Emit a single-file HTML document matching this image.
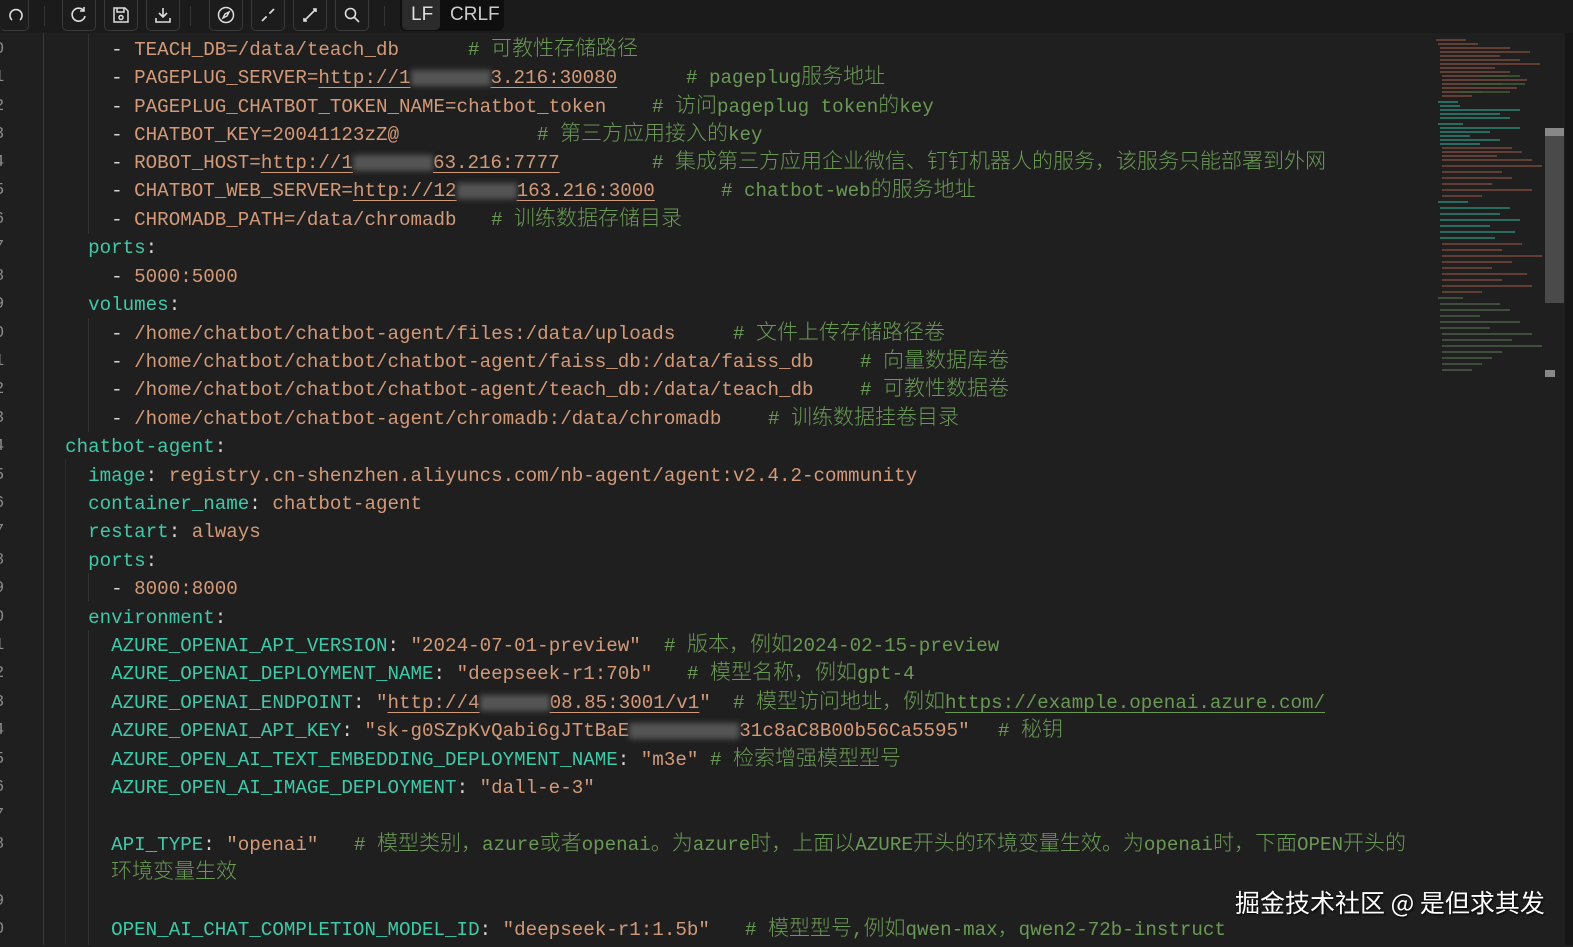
<!DOCTYPE html>
<html><head><meta charset="utf-8"><style>
html,body{margin:0;padding:0;}
body{width:1573px;height:945px;overflow:hidden;background:#1f1f1f;position:relative;font-family:"Liberation Mono","Noto Sans CJK SC",monospace;font-size:19.2px;}
.tb{position:absolute;left:0;top:0;width:1573px;height:33px;background:#1b1b1b;}
.btn{position:absolute;top:0;width:32px;height:30px;border:1px solid #3a3a3a;border-top:none;border-radius:0 0 5px 5px;background:#1c1c1c;}
.btn svg{position:absolute;left:7px;top:6px;}
.sep{position:absolute;top:6px;width:1px;height:20px;background:#333;}
.lf{position:absolute;left:400px;top:0;width:104px;height:31px;background:#0f0f0f;border-radius:0 0 6px 6px;font-family:"Liberation Sans",sans-serif;font-size:19px;color:#ddd;}
.lf span{position:absolute;top:4px;}
.gut{position:absolute;left:43px;top:33px;width:1px;height:912px;background:#3a3a3a;}
.ln{position:absolute;left:-6px;color:#8a8a8a;font-size:17px;}
.wrap{position:absolute;left:0;top:2px;width:1573px;height:945px;}
.l{position:absolute;left:19px;height:28px;line-height:28px;white-space:pre;color:#d4d4d4;}
.c{position:absolute;height:28px;line-height:28px;white-space:pre;color:#6a9955;font-family:"Liberation Mono","Noto Sans CJK SC",monospace;}
.z{font-family:"Noto Sans CJK SC",sans-serif;font-size:21px;font-weight:300;line-height:0;}
.k{color:#3fc9a9;} .s{color:#d39a7a;} .o{color:#d39a7a;}
.u{text-decoration:underline;text-decoration-color:#d39a7a;text-underline-offset:4px;}
.b{display:inline-block;background:#555;filter:blur(3px);height:16px;vertical-align:middle;}
.ig{position:absolute;width:1px;background:#333;}
.wm{position:absolute;left:1235px;top:884px;color:#fff;font-family:"Noto Sans CJK SC",sans-serif;font-size:25px;text-shadow:1px 1px 2px #000;white-space:pre;}
</style></head><body>
<div class="tb">
 <div class="btn" style="left:0px;width:28px;border-left:none"><svg width="18" height="18" viewBox="0 0 18 18" fill="none" stroke="#ddd" stroke-width="1.6"><path d="M5 14A6 6 0 1 1 13 14"/></svg></div>
 <div class="sep" style="left:44px"></div>
 <div class="btn" style="left:62px"><svg width="18" height="18" viewBox="0 0 18 18" fill="none" stroke="#ddd" stroke-width="1.6"><path d="M14 5A6.5 6.5 0 1 0 15 10"/><path d="M14 1v4h-4"/></svg></div>
 <div class="btn" style="left:104px"><svg width="18" height="18" viewBox="0 0 18 18" fill="none" stroke="#ddd" stroke-width="1.5"><path d="M2 2h11l3 3v11H2z"/><path d="M5 2v4h7V2"/><circle cx="9" cy="11.5" r="2"/></svg></div>
 <div class="btn" style="left:146px"><svg width="18" height="18" viewBox="0 0 18 18" fill="none" stroke="#ddd" stroke-width="1.6"><path d="M9 2v9M5 7l4 4 4-4M2 12v4h14v-4"/></svg></div>
 <div class="sep" style="left:190px"></div>
 <div class="btn" style="left:209px"><svg width="18" height="18" viewBox="0 0 18 18" fill="none" stroke="#ddd" stroke-width="1.5"><circle cx="9" cy="9" r="7.5"/><path d="M12 6l-2 4-4 2 2-4z"/></svg></div>
 <div class="btn" style="left:251px"><svg width="18" height="18" viewBox="0 0 18 18" fill="none" stroke="#ddd" stroke-width="1.6"><path d="M3 15l4-4M6 11h1v1M15 3l-4 4M11 6v1h1"/></svg></div>
 <div class="btn" style="left:293px"><svg width="18" height="18" viewBox="0 0 18 18" fill="none" stroke="#ddd" stroke-width="1.6"><path d="M3 15l12-12M3 12v3h3M15 6V3h-3"/></svg></div>
 <div class="btn" style="left:335px"><svg width="18" height="18" viewBox="0 0 18 18" fill="none" stroke="#ddd" stroke-width="1.6"><circle cx="7.5" cy="7.5" r="5"/><path d="M11 11l5 5"/></svg></div>
 <div class="sep" style="left:384px"></div>
 <div class="lf"><div style="position:absolute;left:2px;top:0;width:38px;height:30px;background:#2b2b2b;border-radius:0 0 5px 5px"></div><span style="left:11px">LF</span><span style="left:50px;color:#ccc">CRLF</span></div>
</div>
<div class="gut"></div>
<div class="ig" style="left:88px;top:34px;height:200px"></div>
<div class="ig" style="left:88px;top:318px;height:114px"></div>
<div class="ig" style="left:88px;top:573px;height:28px"></div>
<div class="ig" style="left:65px;top:459px;height:486px;background:#2c2c2c"></div>
<div class="ig" style="left:88px;top:630px;height:315px"></div>

<!-- minimap -->
<svg style="position:absolute;left:1430px;top:36px" width="118" height="345">
<g stroke-width="1.3">
<path d="M6 4h30M8 8h40M10 12h70M10 16h90M10 20h60M10 24h80M10 28h100M10 32h55M10 36h70M12 40h65M12 44h85M12 48h60M12 52h75M12 56h40M12 60h30" stroke="#8a5040"/>
<path d="M50 40h40M40 48h55M30 56h50" stroke="#4a6a3a"/>
<path d="M8 66h20M10 70h20M10 74h80M10 78h60M10 82h70M8 88h25M10 92h80M10 96h50M10 100h30M10 104h60M10 108h40" stroke="#2e9a86"/>
<path d="M12 112h70M12 116h80M12 120h55M12 124h90M12 130h100M12 136h60M12 142h70M12 148h50M12 154h90M12 160h40" stroke="#8a5040"/>
<path d="M8 166h30M10 172h70M10 178h60M10 184h80M10 190h50M10 196h75M10 202h55" stroke="#2e9a86"/>
<path d="M12 208h80M12 214h60M12 220h100M12 226h70M12 232h50M12 238h85M12 244h60M12 250h90M12 256h40" stroke="#8a5040"/>
<path d="M8 262h25M10 268h60M10 274h70M10 280h40M10 286h80M10 292h50M12 298h90M12 304h70M12 310h100M12 316h60M12 322h50M12 328h40M12 334h30" stroke="#556a50"/>
</g></svg>
<div style="position:absolute;left:1545px;top:128px;width:19px;height:175px;background:#4a4a4a"></div>
<div style="position:absolute;left:1545px;top:128px;width:19px;height:8px;background:#888"></div>
<div style="position:absolute;left:1545px;top:370px;width:10px;height:7px;background:#888"></div>
<div style="position:absolute;left:1565px;top:33px;width:8px;height:912px;background:#161616"></div>

<div class="wrap">
<div class="l" style="top:34px">        - <span class="o">TEACH_DB=/data/teach_db</span></div><div class="c" style="left:468px;top:34px"># <span class="z">可教性存储路径</span></div>
<div class="l" style="top:62px">        - <span class="o">PAGEPLUG_SERVER=<span class="u">http://1<span class="b" style="width:80px"></span>3.216:30080</span></span></div><div class="c" style="left:686px;top:62px"># pageplug<span class="z">服务地址</span></div>
<div class="l" style="top:91px">        - <span class="o">PAGEPLUG_CHATBOT_TOKEN_NAME=chatbot_token</span></div><div class="c" style="left:652px;top:91px"># <span class="z">访问</span>pageplug token<span class="z">的</span>key</div>
<div class="l" style="top:119px">        - <span class="o">CHATBOT_KEY=20041123zZ@</span></div><div class="c" style="left:537px;top:119px"># <span class="z">第三方应用接入的</span>key</div>
<div class="l" style="top:147px">        - <span class="o">ROBOT_HOST=<span class="u">http://1<span class="b" style="width:80px"></span>63.216:7777</span></span></div><div class="c" style="left:652px;top:147px"># <span class="z">集成第三方应用企业微信、钉钉机器人的服务，该服务只能部署到外网</span></div>
<div class="l" style="top:175px">        - <span class="o">CHATBOT_WEB_SERVER=<span class="u">http://12<span class="b" style="width:60px"></span>163.216:3000</span></span></div><div class="c" style="left:721px;top:175px"># chatbot-web<span class="z">的服务地址</span></div>
<div class="l" style="top:204px">        - <span class="o">CHROMADB_PATH=/data/chromadb</span></div><div class="c" style="left:491px;top:204px"># <span class="z">训练数据存储目录</span></div>
<div class="l" style="top:232px">      <span class="k">ports</span>:</div>
<div class="l" style="top:261px">        - <span class="o">5000:5000</span></div>
<div class="l" style="top:289px">      <span class="k">volumes</span>:</div>
<div class="l" style="top:318px">        - <span class="o">/home/chatbot/chatbot-agent/files:/data/uploads</span></div><div class="c" style="left:733px;top:318px"># <span class="z">文件上传存储路径卷</span></div>
<div class="l" style="top:346px">        - <span class="o">/home/chatbot/chatbot/chatbot-agent/faiss_db:/data/faiss_db</span></div><div class="c" style="left:860px;top:346px"># <span class="z">向量数据库卷</span></div>
<div class="l" style="top:374px">        - <span class="o">/home/chatbot/chatbot/chatbot-agent/teach_db:/data/teach_db</span></div><div class="c" style="left:860px;top:374px"># <span class="z">可教性数据卷</span></div>
<div class="l" style="top:403px">        - <span class="o">/home/chatbot/chatbot-agent/chromadb:/data/chromadb</span></div><div class="c" style="left:768px;top:403px"># <span class="z">训练数据挂卷目录</span></div>
<div class="l" style="top:431px">    <span class="k">chatbot-agent</span>:</div>
<div class="l" style="top:460px">      <span class="k">image</span>: <span class="o">registry.cn-shenzhen.aliyuncs.com/nb-agent/agent:v2.4.2-community</span></div>
<div class="l" style="top:488px">      <span class="k">container_name</span>: <span class="o">chatbot-agent</span></div>
<div class="l" style="top:516px">      <span class="k">restart</span>: <span class="o">always</span></div>
<div class="l" style="top:545px">      <span class="k">ports</span>:</div>
<div class="l" style="top:573px">        - <span class="o">8000:8000</span></div>
<div class="l" style="top:602px">      <span class="k">environment</span>:</div>
<div class="l" style="top:630px">        <span class="k">AZURE_OPENAI_API_VERSION</span>: <span class="s">"2024-07-01-preview"</span></div><div class="c" style="left:664px;top:630px"># <span class="z">版本，例如</span>2024-02-15-preview</div>
<div class="l" style="top:658px">        <span class="k">AZURE_OPENAI_DEPLOYMENT_NAME</span>: <span class="s">"deepseek-r1:70b"</span></div><div class="c" style="left:687px;top:658px"># <span class="z">模型名称，例如</span>gpt-4</div>
<div class="l" style="top:687px">        <span class="k">AZURE_OPENAI_ENDPOINT</span>: <span class="s">"<span class="u">http://4<span class="b" style="width:70px"></span>08.85:3001/v1</span>"</span></div><div class="c" style="left:733px;top:687px"># <span class="z">模型访问地址，例如</span><span class="u" style="text-decoration-color:#6a9955">https://example.openai.azure.com/</span></div>
<div class="l" style="top:715px">        <span class="k">AZURE_OPENAI_API_KEY</span>: <span class="s">"sk-g0SZpKvQabi6gJTtBaE<span class="b" style="width:110px"></span>31c8aC8B00b56Ca5595"</span></div><div class="c" style="left:998px;top:715px"># <span class="z">秘钥</span></div>
<div class="l" style="top:744px">        <span class="k">AZURE_OPEN_AI_TEXT_EMBEDDING_DEPLOYMENT_NAME</span>: <span class="s">"m3e"</span></div><div class="c" style="left:710px;top:744px"># <span class="z">检索增强模型型号</span></div>
<div class="l" style="top:772px">        <span class="k">AZURE_OPEN_AI_IMAGE_DEPLOYMENT</span>: <span class="s">"dall-e-3"</span></div>
<div class="l" style="top:829px">        <span class="k">API_TYPE</span>: <span class="s">"openai"</span></div><div class="c" style="left:354px;top:829px"># <span class="z">模型类别，</span>azure<span class="z">或者</span>openai<span class="z">。为</span>azure<span class="z">时，上面以</span>AZURE<span class="z">开头的环境变量生效。为</span>openai<span class="z">时，下面</span>OPEN<span class="z">开头的</span></div>
<div class="c" style="left:111px;top:857px"><span class="z">环境变量生效</span></div>
<div class="l" style="top:914px">        <span class="k">OPEN_AI_CHAT_COMPLETION_MODEL_ID</span>: <span class="s">"deepseek-r1:1.5b"</span></div><div class="c" style="left:745px;top:914px"># <span class="z">模型型号</span>,<span class="z">例如</span>qwen-max<span class="z">，</span>qwen2-72b-instruct</div>

<div class="ln" style="top:38px">0</div><div class="ln" style="top:66px">1</div><div class="ln" style="top:95px">2</div><div class="ln" style="top:123px">3</div><div class="ln" style="top:151px">4</div><div class="ln" style="top:179px">5</div><div class="ln" style="top:208px">6</div><div class="ln" style="top:236px">7</div><div class="ln" style="top:265px">8</div><div class="ln" style="top:293px">9</div><div class="ln" style="top:322px">0</div><div class="ln" style="top:350px">1</div><div class="ln" style="top:378px">2</div><div class="ln" style="top:407px">3</div><div class="ln" style="top:435px">4</div><div class="ln" style="top:464px">5</div><div class="ln" style="top:492px">6</div><div class="ln" style="top:520px">7</div><div class="ln" style="top:549px">8</div><div class="ln" style="top:577px">9</div><div class="ln" style="top:606px">0</div><div class="ln" style="top:634px">1</div><div class="ln" style="top:662px">2</div><div class="ln" style="top:691px">3</div><div class="ln" style="top:719px">4</div><div class="ln" style="top:748px">5</div><div class="ln" style="top:776px">6</div><div class="ln" style="top:804px">7</div><div class="ln" style="top:833px">8</div><div class="ln" style="top:890px">9</div><div class="ln" style="top:918px">0</div>
</div>

<div class="wm">掘金技术社区 @ 是但求其发</div>
</body></html>
